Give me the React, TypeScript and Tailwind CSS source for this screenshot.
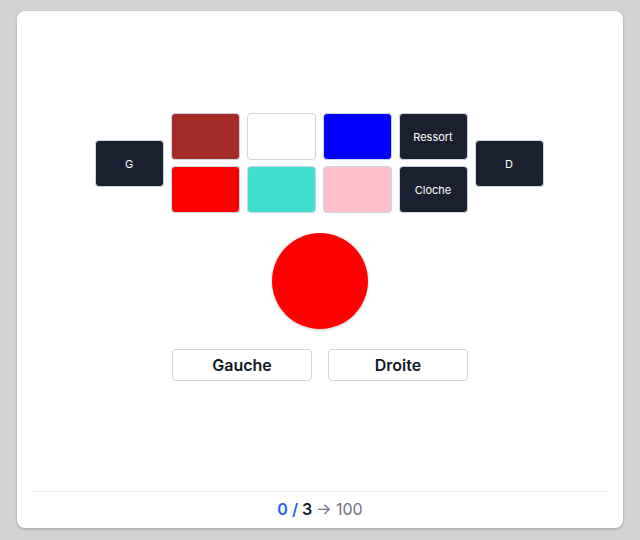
import React from "react";

const Tile = ({ className, children }: { className: string; children?: React.ReactNode }) => (
  <div
    className={`w-[69px] h-[47px] rounded-[4px] border border-[#cbd5e1] flex items-center justify-center pt-[2px] text-[11px] text-white ${className}`}
  >
    {children}
  </div>
);

export default function App() {
  return (
    <div
      className="w-[640px] h-[540px] bg-[#d3d3d3] pt-[11px] px-[17px] pb-[12px]"
      style={{ fontFamily: "Inter, 'Noto Sans', sans-serif" }}
    >
      <div className="h-full bg-white rounded-[8px] shadow-[0_1px_3px_rgba(0,0,0,0.25)] flex flex-col px-[13px]">
        <div className="flex-1 flex flex-col items-center pt-[102px]">
          <div className="flex items-center gap-[7px] pr-[2px]">
            <Tile className="bg-[#1a2030]">G</Tile>
            <div className="grid grid-cols-4 gap-x-[7px] gap-y-[6px]">
              <Tile className="bg-[#a52a2a]" />
              <Tile className="bg-white" />
              <Tile className="bg-[#0000ff]" />
              <Tile className="bg-[#1a2030]">Ressort</Tile>
              <Tile className="bg-[#ff0000]" />
              <Tile className="bg-[#40e0d0]" />
              <Tile className="bg-[#ffc0cb]" />
              <Tile className="bg-[#1a2030]">Cloche</Tile>
            </div>
            <Tile className="bg-[#1a2030]">D</Tile>
          </div>
          <div className="mt-[20px] w-[96px] h-[96px] rounded-full bg-[#ff0000] shadow-[0_1px_3px_rgba(0,0,0,0.2)]" />
          <div className="mt-[20px] flex gap-[16px]">
            <button className="w-[140px] h-[32px] rounded-[4px] border border-[#cbd5e1] bg-white text-[16px] font-semibold text-[#111827]">
              Gauche
            </button>
            <button className="w-[140px] h-[32px] rounded-[4px] border border-[#cbd5e1] bg-white text-[16px] font-semibold text-[#111827]">
              Droite
            </button>
          </div>
        </div>
        <div className="border-t border-[#eeeeee] h-[37px] pb-[3px] flex items-center justify-center text-[16px]">
          <span className="font-semibold text-[#2563eb]">0 /</span>
          <span className="font-semibold text-[#111827] ml-[4px]">3</span>
          <span className="text-[#6b7280] ml-[4px]">→ 100</span>
        </div>
      </div>
    </div>
  );
}
